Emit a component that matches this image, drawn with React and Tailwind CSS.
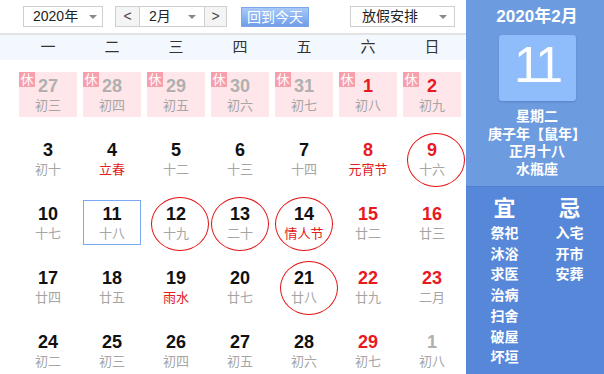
const weekdays = ['一', '二', '三', '四', '五', '六', '日'];

// tone: 'gray' = other month, 'red' = weekend/holiday, 'black' = normal
const weeks = [
  [
    { d: 27, l: '初三', tone: 'gray', rest: true },
    { d: 28, l: '初四', tone: 'gray', rest: true },
    { d: 29, l: '初五', tone: 'gray', rest: true },
    { d: 30, l: '初六', tone: 'gray', rest: true },
    { d: 31, l: '初七', tone: 'gray', rest: true },
    { d: 1, l: '初八', tone: 'red', rest: true },
    { d: 2, l: '初九', tone: 'red', rest: true }
  ],
  [
    { d: 3, l: '初十', tone: 'black' },
    { d: 4, l: '立春', tone: 'black', fest: true },
    { d: 5, l: '十二', tone: 'black' },
    { d: 6, l: '十三', tone: 'black' },
    { d: 7, l: '十四', tone: 'black' },
    { d: 8, l: '元宵节', tone: 'red', fest: true },
    { d: 9, l: '十六', tone: 'red', circle: 'left-[4px]' }
  ],
  [
    { d: 10, l: '十七', tone: 'black' },
    { d: 11, l: '十八', tone: 'black', selected: true },
    { d: 12, l: '十九', tone: 'black', circle: 'left-[4px]' },
    { d: 13, l: '二十', tone: 'black', circle: 'left-0' },
    { d: 14, l: '情人节', tone: 'black', fest: true, circle: 'left-0' },
    { d: 15, l: '廿二', tone: 'red' },
    { d: 16, l: '廿三', tone: 'red' }
  ],
  [
    { d: 17, l: '廿四', tone: 'black' },
    { d: 18, l: '廿五', tone: 'black' },
    { d: 19, l: '雨水', tone: 'black', fest: true },
    { d: 20, l: '廿七', tone: 'black' },
    { d: 21, l: '廿八', tone: 'black', circle: 'left-[5px]' },
    { d: 22, l: '廿九', tone: 'red' },
    { d: 23, l: '二月', tone: 'red' }
  ],
  [
    { d: 24, l: '初二', tone: 'black' },
    { d: 25, l: '初三', tone: 'black' },
    { d: 26, l: '初四', tone: 'black' },
    { d: 27, l: '初五', tone: 'black' },
    { d: 28, l: '初六', tone: 'black' },
    { d: 29, l: '初七', tone: 'red' },
    { d: 1, l: '初八', tone: 'gray' }
  ]
];

const toneClass = {
  gray: 'text-[#b0b0b0]',
  red: 'text-[#e8191f]',
  black: 'text-[#111]'
};

const good = ['祭祀', '沐浴', '求医', '治病', '扫舍', '破屋', '坏垣'];
const bad = ['入宅', '开市', '安葬'];

function Caret() {
  return <span className="w-0 h-0 border-x-[4px] border-x-transparent border-t-[4px] border-t-[#888]" />;
}

function DayCell({ day }) {
  let box = 'border border-transparent';
  if (day.rest) box = 'bg-[#ffe6ea] border border-[#ffe6ea]';
  if (day.selected) box = 'border border-[#7aaaf0]';

  return (
    <div className="relative flex justify-center">
      <div className={`relative w-[58px] h-[45px] flex flex-col items-center pt-[4px] ${box}`}>
        {day.rest ? (
          <span className="absolute -left-px -top-px w-[16px] h-[15px] bg-[#f7a0ac] text-white text-[13px] leading-[15px] text-center">休</span>
        ) : null}
        <span className={`text-[18px] font-bold leading-[18px] ${toneClass[day.tone]}`}>{day.d}</span>
        <span className={`mt-[4px] text-[13px] leading-[14px] ${day.fest ? 'text-[#e02020]' : 'text-[#a5a5a5]'}`}>{day.l}</span>
      </div>
      {day.circle ? (
        <div className={`absolute -top-[3px] w-[58px] h-[54px] rounded-[50%] border-[1.5px] border-[#e41010] ${day.circle} mx-[3px]`} />
      ) : null}
    </div>
  );
}

export default function App() {
  return (
    <div className="w-[604px] h-[374px] overflow-hidden flex bg-white font-['Liberation_Sans','Noto_Sans_CJK_SC',sans-serif]">
      <div className="w-[466px] flex flex-col">
        <div className="h-[35px] flex items-start pt-[6px] text-[14px] text-[#222] border-b-2 border-[#e3e3e3]">
          <div className="ml-[23px] w-[80px] h-[21px] border border-[#cfcfcf] flex items-center justify-between pl-[9px] pr-[5px]">
            <span>2020年</span>
            <Caret />
          </div>
          <div className="ml-[12px] flex h-[21px] border border-[#cfcfcf]">
            <div className="w-[24px] flex items-center justify-center bg-[#f4f4f4] border-r border-[#cfcfcf] text-[#444]">&lt;</div>
            <div className="w-[64px] flex items-center justify-between pl-[9px] pr-[8px]">
              <span>2月</span>
              <Caret />
            </div>
            <div className="w-[22px] flex items-center justify-center bg-[#f4f4f4] border-l border-[#cfcfcf] text-[#444]">&gt;</div>
          </div>
          <div className="ml-[14px] mt-px w-[68px] h-[20px] flex items-center justify-center bg-gradient-to-b from-[#a9caf8] to-[#6f9de8] border border-[#7ea6ea] text-white">
            回到今天
          </div>
          <div className="ml-[41px] w-[105px] h-[21px] border border-[#cfcfcf] flex items-center justify-between pl-[11px] pr-[7px]">
            <span>放假安排</span>
            <Caret />
          </div>
        </div>

        <div className="h-[25px] bg-[#f3f8ff] grid grid-cols-[repeat(7,64px)] pl-[16px] items-center text-[15px] text-[#333]">
          {weekdays.map((w) => (
            <span key={w} className="text-center">{w}</span>
          ))}
        </div>

        <div className="pt-[12px] pl-[16px] grid grid-cols-[repeat(7,64px)] gap-y-[19px]">
          {weeks.flat().map((day, i) => (
            <DayCell key={i} day={day} />
          ))}
        </div>
      </div>

      <div className="flex-1 flex flex-col text-white font-bold">
        <div className="h-[186px] bg-[#6c9be0] flex flex-col items-center pl-[4px]">
          <div className="mt-[7px] text-[17px] leading-[20px]">2020年2月</div>
          <div className="mt-[8px] w-[77px] h-[66px] rounded-[3px] bg-[#8fbcfb] shadow-[0_1px_2px_rgba(40,80,160,0.35)] flex items-center justify-center">
            <span className="text-[50px] font-normal leading-none tracking-[-3px] -mt-[6px]">11</span>
          </div>
          <div className="mt-[7px] flex flex-col items-center text-[14px] leading-[17.5px] whitespace-nowrap">
            <span>星期二</span>
            <span>庚子年【鼠年】</span>
            <span>正月十八</span>
            <span>水瓶座</span>
          </div>
        </div>
        <div className="flex-1 bg-[#5687d8] border-t border-[#4f7fd0] grid grid-cols-[65px_65px] pl-[6px] pt-[9px]">
          <div className="flex flex-col items-center">
            <span className="text-[22px] leading-[26px] mb-[1px]">宜</span>
            {good.map((g) => (
              <span key={g} className="text-[14px] leading-[20.7px]">{g}</span>
            ))}
          </div>
          <div className="flex flex-col items-center">
            <span className="text-[22px] leading-[26px] mb-[1px]">忌</span>
            {bad.map((g) => (
              <span key={g} className="text-[14px] leading-[20.7px]">{g}</span>
            ))}
          </div>
        </div>
      </div>
    </div>
  );
}
